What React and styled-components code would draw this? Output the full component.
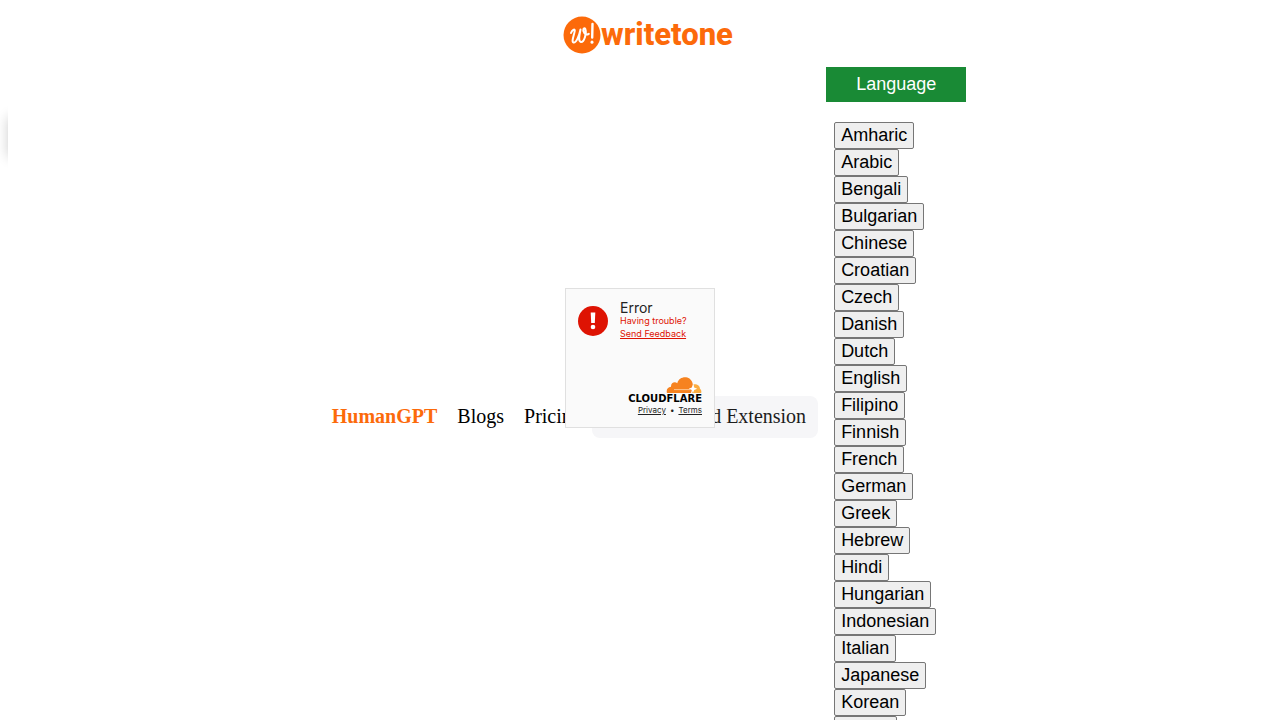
import styled, { createGlobalStyle } from "styled-components";

const languages = [
  "Amharic", "Arabic", "Bengali", "Bulgarian", "Chinese", "Croatian",
  "Czech", "Danish", "Dutch", "English", "Filipino", "Finnish",
  "French", "German", "Greek", "Hebrew", "Hindi", "Hungarian",
  "Indonesian", "Italian", "Japanese", "Korean", "Polish", "Portuguese",
];

const Logo = () => (
  <LogoLink href="#home">
    <svg width="38" height="38" viewBox="0 0 38 38" aria-hidden="true">
      <circle cx="19" cy="19" r="18.5" fill="#fc6a0a" />
      <g fill="none" stroke="#fff" strokeLinecap="round" strokeLinejoin="round">
        <path d="M8 17c1-3 4-4.500 3.800-2.500C11.500 18 8 26 10.500 26.500c3 .5 6-8 7-13-1 5-2.500 12 .3 12.500 3.500.5 6-9 4.500-13-1.200-2.500-3.300 1-1 4 1.500 1.800 3 1.800 4.500.8" strokeWidth="2" />
        <path d="M29.500 8l-.3 13.500" strokeWidth="2.400" />
        <path d="M29 26v.2" strokeWidth="3" />
      </g>
    </svg>
    <LogoText>writetone</LogoText>
  </LogoLink>
);

const Turnstile = () => (
  <Overlay>
    <Widget role="alert">
      <Status>
        <svg width="30" height="30" viewBox="0 0 30 30" aria-hidden="true">
          <circle cx="15" cy="15" r="15" fill="#de1303" />
          <path d="M12.700 6.500h4.600l-.5 10.500h-3.600z" fill="#fff" />
          <circle cx="15" cy="21" r="2.300" fill="#fff" />
        </svg>
        <div>
          <ErrorTitle>Error</ErrorTitle>
          <Help>Having trouble?</Help>
          <HelpLink href="#feedback">Send Feedback</HelpLink>
        </div>
      </Status>
      <Branding>
        <svg width="36" height="16" viewBox="0 0 36 16" aria-hidden="true">
          <path d="M1 16c-1-3 .5-6 4-6.300C4.800 6 8.500 4.200 11.300 6.200 13-1 24-2.200 26.500 6c.5 1.600.3 3 0 4.500L25 16z" fill="#f6821f" />
          <path d="M26 16l1.500-5.500c.4-1.500.3-2.500 0-3.300 4-.4 6.500 1.800 6.500 4.500 1.500 1 1.500 3 1.200 4.300z" fill="#fbad41" />
          <path d="M8 12.600h16" stroke="#fcc58f" strokeWidth="1" />
          <path d="M27 7.500l1.200 3 3 1.200-3 1.200-1.200 3-1.200-3-3-1.200 3-1.200z" fill="#fff" />
        </svg>
        <BrandName>CLOUDFLARE</BrandName>
        <Legal>
          <a href="#privacy">Privacy</a>
          <span>•</span>
          <a href="#terms">Terms</a>
        </Legal>
      </Branding>
    </Widget>
  </Overlay>
);

const App = () => {
  return (
    <Page>
      <GlobalStyle />
      <Shadow />
      <Content>
        <Header>
          <Logo />
        </Header>
        <Nav>
          <NavLink href="#humangpt" $accent>HumanGPT</NavLink>
          <NavLink href="#blogs">Blogs</NavLink>
          <NavLink href="#pricing">Pricing</NavLink>
          <ExtensionLink href="#extension">
            <svg width="24" height="24" viewBox="0 0 24 24" fill="none" stroke="#222" strokeWidth="2" aria-hidden="true">
              <path d="M12 3v12M7 10l5 5 5-5M4 20h16" />
            </svg>
            Download Extension
          </ExtensionLink>
          <LanguageMenu>
            <LanguageButton type="button">Language</LanguageButton>
            <LanguageList>
              {languages.map((name) => (
                <li key={name}>
                  <LanguageOption type="button">{name}</LanguageOption>
                </li>
              ))}
            </LanguageList>
          </LanguageMenu>
        </Nav>
      </Content>
      <Turnstile />
    </Page>
  );
};

export default App;

const GlobalStyle = createGlobalStyle`
  body {
    margin: 0;
    background: #fff;
    font-family: "Liberation Serif", serif;
    font-size: 20px;
  }

  button {
    font-family: "Liberation Sans", sans-serif;
    font-size: 18px;
    line-height: 21px;
    cursor: pointer;
  }
`;

const Page = styled.div`
  position: relative;
  height: 100vh;
  overflow: hidden;
  padding-left: 8px;
`;

/* only its left edge shows, the content covers the rest */
const Shadow = styled.div`
  position: absolute;
  top: 117px;
  left: 8px;
  right: 0;
  height: 40px;
  box-shadow: 0 0 12px rgba(0, 0, 0, 0.2);
`;

const Content = styled.div`
  position: relative;
  min-height: 100vh;
  background: #fff;
`;

const Header = styled.header`
  display: flex;
  justify-content: center;
  padding: 16px 0 13px 8px;
`;

const LogoLink = styled.a`
  display: flex;
  align-items: center;
  height: 38px;
  color: #fc6a0a;
  text-decoration: none;
`;

const LogoText = styled.span`
  font-family: Roboto, sans-serif;
  font-size: 31px;
  font-weight: 800;
  line-height: 36px;
`;

const Nav = styled.nav`
  display: flex;
  justify-content: center;
  align-items: center;
`;

const NavLink = styled.a`
  padding: 0 10px 2px;
  color: ${(props) => (props.$accent ? "#fc6a0a" : "#000")};
  font-weight: ${(props) => (props.$accent ? 700 : 400)};
  line-height: 24px;
  text-decoration: none;
`;

const ExtensionLink = styled.a`
  display: flex;
  align-items: center;
  gap: 10px;
  padding: 8px 12px 10px;
  border-radius: 8px;
  background: #f6f6f8;
  color: #1d1d1d;
  line-height: 24px;
  text-decoration: none;
`;

const LanguageMenu = styled.div`
  margin-left: 8px;
`;

const LanguageButton = styled.button`
  display: block;
  padding: 7px 30px;
  border: 0;
  background: #198a35;
  color: #fff;
`;

const LanguageList = styled.ul`
  max-height: 645px;
  margin: 20px 0 0;
  padding: 0 0 0 8px;
  overflow: hidden;
  list-style: none;
`;

const LanguageOption = styled.button`
  display: block;
  padding: 2px 6px;
  border: 1px solid #767676;
  border-radius: 2px;
  background: #efefef;
  color: #000;
`;

const Overlay = styled.div`
  position: fixed;
  inset: 0;
  display: flex;
  align-items: center;
  justify-content: center;
  padding-bottom: 4px;
`;

const Widget = styled.div`
  box-sizing: border-box;
  display: flex;
  flex-direction: column;
  justify-content: space-between;
  width: 150px;
  height: 140px;
  padding: 12px;
  border: 1px solid #e0e0e0;
  background: #fafafa;
  color: #232323;
  font-family: Inter, sans-serif;
`;

const Status = styled.div`
  display: flex;
  gap: 12px;

  svg {
    flex-shrink: 0;
    margin-top: 5px;
  }
`;

const ErrorTitle = styled.div`
  font-size: 14px;
  line-height: 13px;
`;

const Help = styled.div`
  color: #de1303;
  font-size: 9px;
  line-height: 13px;
  white-space: nowrap;
`;

const HelpLink = styled.a`
  display: block;
  color: #de1303;
  font-size: 9px;
  line-height: 13px;
  white-space: nowrap;
`;

const Branding = styled.div`
  display: flex;
  flex-direction: column;
  align-items: flex-end;
`;

const BrandName = styled.div`
  color: #000;
  font-family: "DejaVu Sans", sans-serif;
  font-size: 10px;
  font-weight: 700;
  line-height: 12px;
`;

const Legal = styled.div`
  display: flex;
  gap: 4px;
  font-size: 8px;
  line-height: 10px;

  a {
    color: inherit;
  }
`;
